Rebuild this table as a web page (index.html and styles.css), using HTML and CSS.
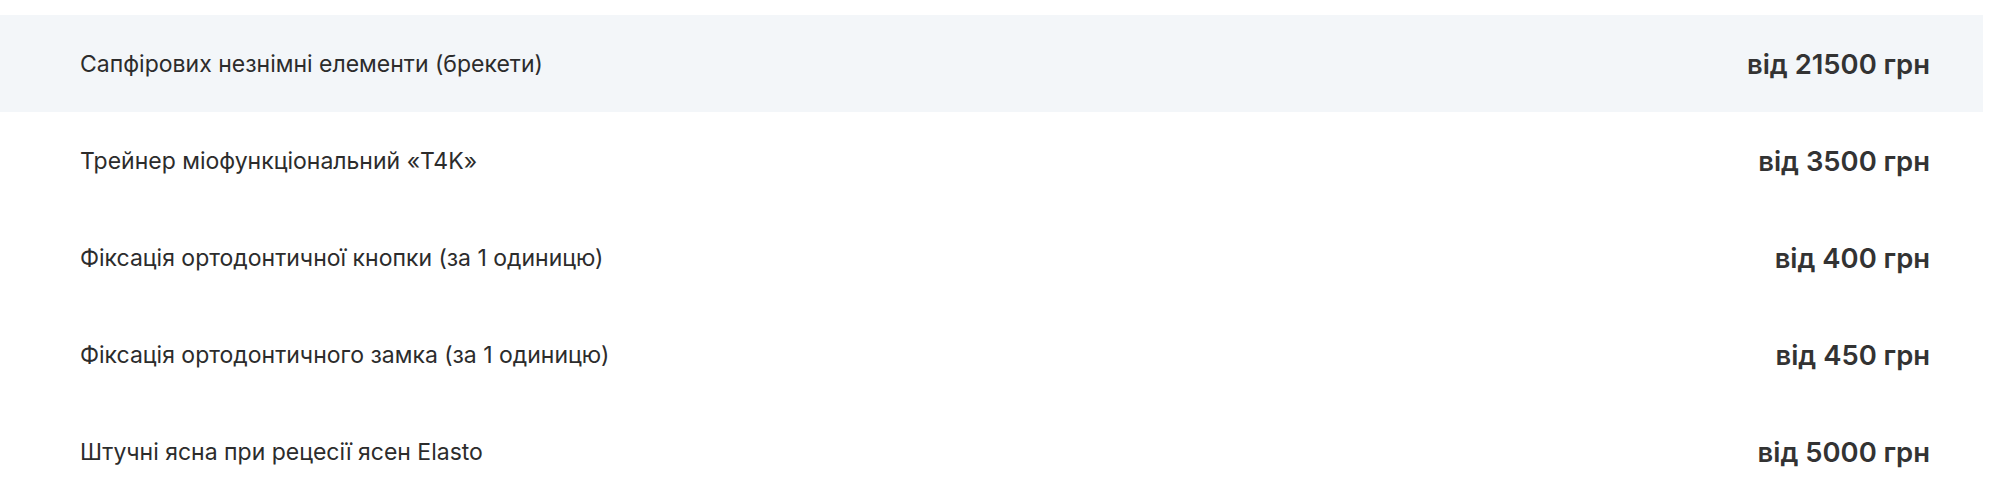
FILE: index.html
```html
<!DOCTYPE html>
<html lang="uk">
<head>
    <meta charset="UTF-8">
    <meta name="viewport" content="width=device-width, initial-scale=1.0">
    <title>Ціни</title>
    <link rel="stylesheet" href="styles.css">
</head>
<body>
    <div class="price-list">
        <div class="price-row active">
            <span class="service">Сапфірових незнімні елементи (брекети)</span>
            <span class="price">від 21500 грн</span>
        </div>
        <div class="price-row">
            <span class="service">Трейнер міофункціональний «T4K»</span>
            <span class="price">від 3500 грн</span>
        </div>
        <div class="price-row">
            <span class="service">Фіксація ортодонтичної кнопки (за 1 одиницю)</span>
            <span class="price">від 400 грн</span>
        </div>
        <div class="price-row">
            <span class="service">Фіксація ортодонтичного замка (за 1 одиницю)</span>
            <span class="price">від 450 грн</span>
        </div>
        <div class="price-row">
            <span class="service">Штучні ясна при рецесії ясен Elasto</span>
            <span class="price">від 5000 грн</span>
        </div>
    </div>
</body>
</html>
```

FILE: styles.css
```css
body {
    margin: 0;
    padding: 0;
    background-color: #fff;
    font-family: 'Inter', 'Noto Sans', sans-serif;
    color: #2c2c2c;
}

.price-list {
    width: 1983px;
    padding-top: 15px;
}

.price-row {
    display: flex;
    justify-content: space-between;
    align-items: center;
    height: 97px;
    padding: 0 53px 0 80px;
    box-sizing: border-box;
}

.price-row.active {
    background-color: #f3f6f9;
}

.service {
    font-size: 23px;
    font-weight: 400;
}

.price {
    font-size: 27.4px;
    font-weight: 600;
    color: #333;
}
```
